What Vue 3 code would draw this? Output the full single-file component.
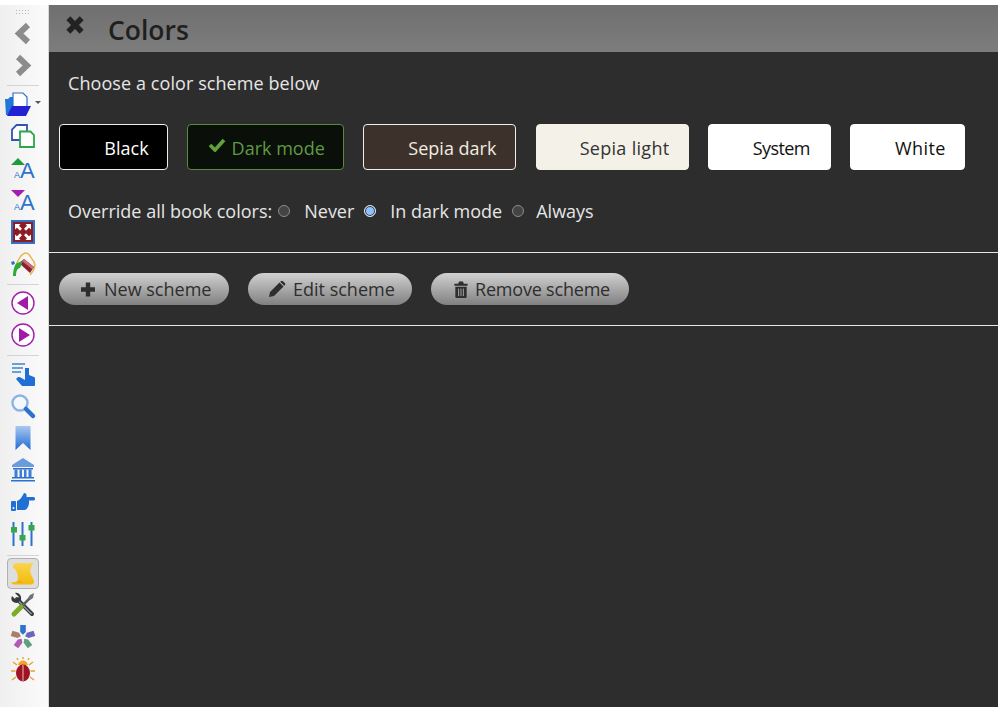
<script setup>
const swatches = [
  { name: 'Black', cls: 'black', width: 109 },
  { name: 'Dark mode', cls: 'dark', width: 157, check: true },
  { name: 'Sepia dark', cls: 'sepiad', width: 153 },
  { name: 'Sepia light', cls: 'sepial', width: 153 },
  { name: 'System', cls: 'white sys', width: 123 },
  { name: 'White', cls: 'white wht', width: 115 },
]
const petals = [
  { a: 0, c: '#2f72d0' },
  { a: 72, c: '#6f63c0' },
  { a: 144, c: '#5fa07c' },
  { a: 216, c: '#b05cb5' },
  { a: 288, c: '#a97f66' },
]
</script>

<template>
  <div class="app">
    <div class="topstrip"></div>
    <div class="body">
      <aside class="bar">
        <div class="grip"></div>
        <div class="ico"><svg viewBox="0 0 24 24"><path d="M17 4 8 12.500 17 21" fill="none" stroke="#8c8c8c" stroke-width="6"/></svg></div>
        <div class="ico"><svg viewBox="0 0 24 24"><path d="M7 4 16 12.500 7 21" fill="none" stroke="#8c8c8c" stroke-width="6"/></svg></div>
        <hr class="sep sep1">
        <div class="ico open">
          <svg viewBox="0 0 26 24"><path d="M0 7h3l2-2h4v18H1z" fill="#1f78d8"/><path d="M8 1h10l4 4v11H8z" fill="#fff" stroke="#2c71c9" stroke-width="1.200"/><path d="M2 24 7 14H26L21 24z" fill="#2222d2"/></svg>
          <i class="caret"></i>
        </div>
        <div class="ico"><svg viewBox="0 0 24 24"><path d="M5.500 1H16V16H1V5.500z" fill="#fff" stroke="#2f55b3" stroke-width="1.800"/><path d="M9 7.500H19.500L23 11V23H9z" fill="#fff" stroke="#2aa84a" stroke-width="1.800"/></svg></div>
        <div class="ico"><svg viewBox="0 0 24 24"><path d="M0 9 7 2l7 7z" fill="#1e9b3c"/><text x="3" y="21.500" class="ta small">A</text><text x="9" y="21.500" class="ta big">A</text></svg></div>
        <div class="ico"><svg viewBox="0 0 24 24"><path d="M0 2h14L7 9z" fill="#a51db0"/><text x="3" y="21.500" class="ta small">A</text><text x="9" y="21.500" class="ta big">A</text></svg></div>
        <div class="ico"><svg viewBox="0 0 24 24"><rect x="1" y="1" width="22" height="22" fill="#8d1c24" stroke="#2f72c8" stroke-width="2"/><path d="M4 4h5.500L8 5.800l3 3L9 10.800l-3-3L4 9.500zM20 4v5.500L18 7.800l-3 3-2-2 3-3L14.500 4zM4 20v-5.500L6 16.200l3-3 2 2-3 3L9.500 20zM20 20h-5.500L16 18.200l-3-3 2-2 3 3 2-1.700z" fill="#fff"/></svg></div>
        <div class="ico"><svg viewBox="0 0 24 24"><path d="M5 14C7 7 11 1 15 1c3 0 4 3 6 6 3 3 4 7 1 12l-3 4" fill="none" stroke="#e8b84c" stroke-width="1.500"/><path d="M8 11l5-4 10 8-4 6z" fill="#8c2030"/><path d="M13 7l10 8-1.500 2.500L11 9z" fill="#c9707a"/><path d="M2 24c0-4 1-11 4-13 2-1 4-1 6-2L9 16c-3 0-4 4-4 8z" fill="#2faa38"/><path d="M0 10l3-1 1 3-3 1z" fill="#2f72c8"/></svg></div>
        <hr class="sep sep2">
        <div class="ico"><svg viewBox="0 0 24 24"><circle cx="12" cy="12" r="11" fill="#fff" stroke="#a020a8" stroke-width="1.400"/><path d="M17 5v14L6 12z" fill="#a31aa8"/></svg></div>
        <div class="ico"><svg viewBox="0 0 24 24"><circle cx="12" cy="12" r="11" fill="#fff" stroke="#a020a8" stroke-width="1.400"/><path d="M8 5v14l11-7z" fill="#a31aa8"/></svg></div>
        <hr class="sep sep3">
        <div class="ico"><svg viewBox="0 0 24 24"><path d="M1 1h13v2H1zM1 5h11v2H1zM1 9h9v2H1z" fill="#6a9edf"/><path d="M14 6h4v7l5 2c1 .4 1 1 1 2v6c0 .5-.5 1-1 1H11L5 17l2-2c2-.5 4 1 7 3z" fill="#1f6fd4"/></svg></div>
        <div class="ico"><svg viewBox="0 0 24 24"><circle cx="9" cy="9" r="7.500" fill="#f4f7fc" stroke="#8db3e6" stroke-width="2.400"/><path d="m15 15 7 7" stroke="#2a72d0" stroke-width="4.500" stroke-linecap="round"/></svg></div>
        <div class="ico"><svg viewBox="0 0 24 24"><defs><linearGradient id="bm" x1="0" y1="0" x2="0" y2="1"><stop offset="0" stop-color="#a9c8f0"/><stop offset="1" stop-color="#1f6cd4"/></linearGradient></defs><path d="M4.500 0h15v24L12 17l-7.500 7z" fill="url(#bm)"/></svg></div>
        <div class="ico"><svg viewBox="0 0 24 24"><path d="M12 0 23 7v2H1V7z" fill="#6a9bdd"/><path d="M2 10h20v1.500H2zM1 19h22v1.500H1zM0 22h24v1.500H0z" fill="#2a72d0"/><path d="M3.500 11.500h3V19h-3zM8.500 11.500h2.500V19H8.500zM13 11.500h2.500V19H13zM17.500 11.500h3V19h-3z" fill="#3c7ed4"/></svg></div>
        <div class="ico"><svg viewBox="0 0 24 24"><rect x="0" y="11" width="5" height="10" rx="1" fill="#1f6fd4"/><circle cx="2.500" cy="18" r="1" fill="#fff"/><path d="M6 11c3-1 5-4 7-8 2 0 3 1 2.500 4h7c2 0 2 3.500 0 3.500H18c.5 3.500-1 8.500-4 9.500H6z" fill="#1f6fd4"/></svg></div>
        <div class="ico"><svg viewBox="0 0 24 24"><path d="M2.500 0v24M11.500 0v24M20.500 0v24" stroke="#2a72d0" stroke-width="2"/><path d="M0 5h6v5.500H0zM8.500 13h6v5.500h-6zM17.500 3h6v5.500h-6z" fill="#35a84a"/></svg></div>
        <hr class="sep sep4">
        <div class="ico active"><svg viewBox="0 0 24 24"><defs><linearGradient id="sc" x1="0" y1="0" x2="0" y2="1"><stop offset="0" stop-color="#f8d64e"/><stop offset="1" stop-color="#f5b80c"/></linearGradient></defs><path d="M4 1.500C8 0 16 2 22.500 1 20 5 18.500 8 20 12c.8 2.500 2.200 4.500 3 7 .4 2-1 3.500-3 3.500H3c-1.500 0-2.500-.8-2.500-2.500 2 .5 4 .3 5.500-.5 1.500-3 1-7-.5-10-.6-2-2-3-3.500-4-.5-1.500.6-3.200 2-3.500z" fill="url(#sc)"/><path d="M6 19.500c2 .5 3.500.5 5 .5" stroke="#e0a510" stroke-width="1" fill="none"/></svg></div>
        <div class="ico"><svg viewBox="0 0 24 24"><path d="M6 6 21 21" stroke="#3a3f44" stroke-width="4" stroke-linecap="round"/><path d="M6.500 7 20.500 21" stroke="#ddd" stroke-width="1"/><path d="M1 3l4 4 3-3-4-4C7-1 11 2 10 7L6 10C2 10-1 7 1 3z" fill="#33383d"/><path d="M10 14 20 4" stroke="#5d6266" stroke-width="2.500"/><path d="M23 0l-1 5-3 2-2-2 2-3z" fill="#6e7377"/><path d="M3 21 10 14" stroke="#7cab25" stroke-width="5" stroke-linecap="round"/></svg></div>
        <div class="ico"><svg viewBox="0 0 24 24"><path v-for="p in petals" :key="p.a" d="M9.200 0h5.600v7l-2.800 2.800L9.200 7z" :fill="p.c" :transform="`rotate(${p.a} 12 12)`"/></svg></div>
        <div class="ico bug"><svg viewBox="0 0 24 24"><path d="M7 7c1-6 9-6 10 0z" fill="#f2a51f"/><ellipse cx="12" cy="15" rx="7" ry="8.500" fill="#a01227"/><path d="M12 7v16" stroke="#e8c0a0" stroke-width="1"/><path d="M2 4l4 3M22 4l-4 3M0 13h4.500M24 13h-4.500M1 22l4-3M23 22l-4-3M12 -1v2M6 0l1 2M18 0l-1 2" stroke="#e9a02c" stroke-width="1.400"/></svg></div>
      </aside>

      <main class="panel">
        <header class="head">
          <svg class="close" viewBox="0 0 18 18"><path d="M3 3l12 12M15 3 3 15" stroke="#222" stroke-width="5"/></svg>
          <h1>Colors</h1>
        </header>
        <p class="lead">Choose a color scheme below</p>
        <div class="swatches">
          <div v-for="s in swatches" :key="s.name" class="swatch" :class="s.cls" :style="{ width: s.width + 'px' }">
            <svg v-if="s.check" class="check" viewBox="0 0 18 14"><path d="M2 7l5 5 9-10" fill="none" stroke="#5fa239" stroke-width="3.600"/></svg>
            <span>{{ s.name }}</span>
          </div>
        </div>
        <div class="override">
          <span class="olabel">Override all book colors:</span>
          <i class="radio"></i><span class="opt o1">Never</span>
          <i class="radio on"></i><span class="opt o2">In dark mode</span>
          <i class="radio last"></i><span class="opt">Always</span>
        </div>
        <div class="actions">
          <div class="btn b-new">
            <svg viewBox="0 0 16 16"><path d="M8 1v14M1 8h14" stroke="#2e2e2e" stroke-width="4.400"/></svg>
            <span>New scheme</span>
          </div>
          <div class="btn b-edit">
            <svg viewBox="0 0 18 18"><path d="M1 17l1-5L11.500 2.500l4 4L6 16zM12.800 1.200c.7-.7 1.500-.7 2.200 0l1.800 1.800c.7.700.7 1.500 0 2.200l-.6.600-4-4z" fill="#2e2e2e"/></svg>
            <span>Edit scheme</span>
          </div>
          <div class="btn b-rem">
            <svg viewBox="0 0 16 18"><path d="M1 3h14v2H1zM5 3l1-2.500h4L11 3zM2 6h12v11c0 .5-.5 1-1 1H3c-.5 0-1-.5-1-1z" fill="#2e2e2e"/><path d="M5.500 8v8M8 8v8M10.500 8v8" stroke="#aaa" stroke-width="1"/></svg>
            <span>Remove scheme</span>
          </div>
        </div>
      </main>
    </div>
  </div>
</template>

<style>
html, body { margin: 0; background: #fff; }
</style>

<style scoped>
.app {
  width: 998px;
  height: 707px;
  overflow: hidden;
  font-family: "Open Sans", "Noto Sans", sans-serif;
}
.topstrip { height: 5px; background: #fff; }
.body { display: flex; height: 702px; }
.bar {
  width: 49px;
  flex: none;
  box-sizing: border-box;
  padding-right: 2px;
  border-right: 1px solid #d8d8d8;
  background: linear-gradient(90deg, #efefef, #fbfbfb);
  display: flex;
  flex-direction: column;
  align-items: center;
}
.grip {
  width: 16px;
  height: 5px;
  margin: 4px 0 3px;
  background-image: radial-gradient(circle, #b5b5b5 0.6px, transparent 0.8px);
  background-size: 3px 3px;
}
.ico {
  width: 32px;
  height: 32px;
  flex: none;
  display: flex;
  align-items: center;
  justify-content: center;
  position: relative;
  box-sizing: border-box;
}
.ico svg { width: 24px; height: 24px; display: block; overflow: visible; }
.open svg { width: 26px; height: 24px; margin-left: -10px; }
.caret {
  position: absolute;
  left: 28px;
  top: 13px;
  border: 3.500px solid transparent;
  border-top-color: #555;
  border-bottom: 0;
}
.active {
  height: 31px;
  background: #dedede;
  border: 1px solid #b0b0b0;
  border-radius: 4px;
  margin-top: 2px;
}
.bug { margin-top: 1px; }
.sep { width: 32px; border: 0; border-top: 1px solid #d4d4d4; margin: 0; flex: none; }
.sep1 { margin: 4px 0 2px; }
.sep2 { margin: 4px 0 2px; }
.sep3 { margin: 4px 0 2px; }
.sep4 { margin: 5px 0 0; }
.ta { font-family: "Liberation Sans", sans-serif; fill: #2f72c8; }
.small { font-size: 9px; }
.big { font-size: 22px; }

.panel {
  flex: 1;
  background: #2d2d2d;
  color: #e6e6e6;
  font-size: 18px;
  min-width: 0;
}
.head {
  height: 47px;
  background: linear-gradient(#6f6f6f, #7d7d7d);
  display: flex;
  align-items: center;
  box-sizing: border-box;
  padding-left: 16px;
}
.close { width: 20px; height: 20px; margin-top: -7px; }
h1 {
  margin: 3px 0 0 23px;
  font-size: 26.500px;
  font-weight: 600;
  color: #1f1f1f;
  line-height: 47px;
}
.lead { margin: 19px 0 0 19px; line-height: 25px; letter-spacing: 0.08px; }
.swatches { display: flex; gap: 19.200px; margin: 28px 0 0 10px; }
.swatch {
  height: 46px;
  box-sizing: border-box;
  border: 1px solid #eee;
  border-radius: 4px;
  display: flex;
  align-items: center;
  justify-content: center;
  gap: 6px;
  padding: 2px 0 0 26px;
}
.black { background: #000; color: #fff; }
.dark { background: #0a0f0a; color: #5f9a44; border-color: #5a8a40; padding-left: 1px; }
.sepiad { background: #3d322b; color: #f2ebe0; padding-left: 25px; }
.sepial { background: #f4f1e8; color: #333; border-color: #f4f1e8; letter-spacing: 0.3px; padding-left: 25px; }
.white { background: #fff; color: #111; border-color: #fff; }
.sys { letter-spacing: -0.6px; padding-left: 24px; }
.wht { letter-spacing: 0.4px; }
.check { width: 18px; height: 14px; margin-top: -6px; }
.override { display: flex; align-items: center; margin: 28px 0 0 19px; height: 26px; }
.radio {
  width: 10px;
  height: 10px;
  border-radius: 50%;
  border: 1px solid #8a8a8a;
  background: #444;
  margin: 0 14px 0 6px;
  flex: none;
}
.radio.on { background: #8fc0ff; border: 1px solid #e0e9f5; box-shadow: inset 0 0 0 1px #2d2d2d; margin-left: 10px; }
.radio.last { margin-right: 12px; }
.o2 { margin-right: 4px; }
.actions {
  margin-top: 28px;
  border-top: 1px solid #e6e6e6;
  border-bottom: 1px solid #e6e6e6;
  height: 74px;
  box-sizing: border-box;
  display: flex;
  align-items: center;
  gap: 19px;
  padding-left: 10px;
}
.btn {
  height: 32px;
  border-radius: 16px;
  background: linear-gradient(#d0d0d0, #808080);
  color: #2e2e2e;
  display: flex;
  align-items: center;
  gap: 7px;
  box-sizing: border-box;
  padding-left: 21px;
}
.b-new { width: 170px; gap: 8px; }
.b-edit { width: 164px; padding-left: 20px; gap: 7px; }
.b-edit svg { width: 18px !important; height: 18px !important; }
.b-rem { width: 198px; padding-left: 22px; gap: 6px; letter-spacing: -0.2px; }
.btn svg { width: 16px; height: 17px; flex: none; }
</style>
